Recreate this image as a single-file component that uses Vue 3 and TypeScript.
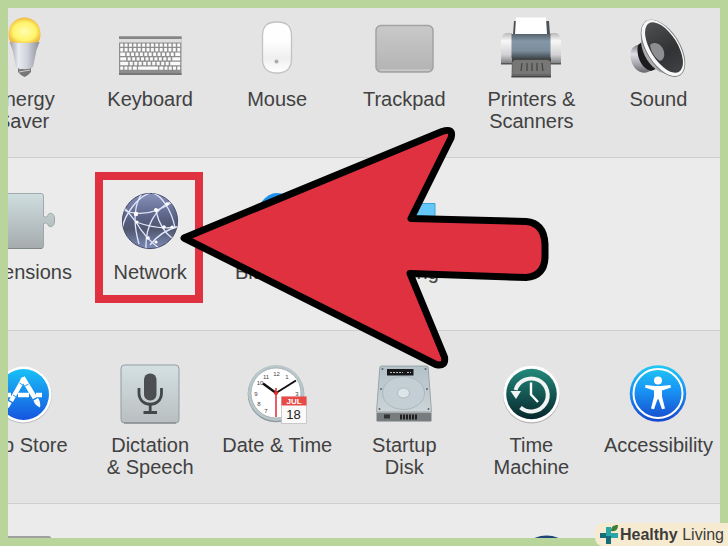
<script setup lang="ts">
interface Pane {
  icon: string
  label: string
  highlighted?: boolean
}

const rows: Pane[][] = [
  [
    { icon: 'energy', label: 'Energy\nSaver' },
    { icon: 'keyboard', label: 'Keyboard' },
    { icon: 'mouse', label: 'Mouse' },
    { icon: 'trackpad', label: 'Trackpad' },
    { icon: 'printer', label: 'Printers &\nScanners' },
    { icon: 'sound', label: 'Sound' },
  ],
  [
    { icon: 'extensions', label: 'Extensions' },
    { icon: 'network', label: 'Network', highlighted: true },
    { icon: 'bluetooth', label: 'Bluetooth' },
    { icon: 'sharing', label: 'Sharing' },
  ],
  [
    { icon: 'appstore', label: 'App Store' },
    { icon: 'dictation', label: 'Dictation\n& Speech' },
    { icon: 'clock', label: 'Date & Time' },
    { icon: 'disk', label: 'Startup\nDisk' },
    { icon: 'timemachine', label: 'Time\nMachine' },
    { icon: 'accessibility', label: 'Accessibility' },
  ],
]

// Key widths per keyboard row, in drawing units
const keyRows: number[][] = [
  [3, 3, 3, 3, 3, 3, 3, 3, 3, 3, 3, 3, 3, 3],
  [3, 3, 3, 3, 3, 3, 3, 3, 3, 3, 3, 3, 3, 3],
  [5, 3, 3, 3, 3, 3, 3, 3, 3, 3, 3, 3, 5],
  [6, 3, 3, 3, 3, 3, 3, 3, 3, 3, 3, 8],
  [8, 3, 3, 3, 3, 3, 3, 3, 3, 3, 10],
  [3, 3, 3, 4, 20, 4, 3, 3, 3, 3],
]

const keys = keyRows.flatMap((widths, row) => {
  const total = widths.reduce((a, b) => a + b, 0)
  const gap = (60 - total) / (widths.length - 1)
  let x = 2.2
  return widths.map((w) => {
    const key = { x, y: 27.4 + row * 4.6, w }
    x += w + gap
    return key
  })
})

const clockNumbers = [
  { n: '12', x: 31.5, y: 14 },
  { n: '1', x: 42, y: 17 },
  { n: '3', x: 52, y: 34 },
  { n: '7', x: 21, y: 51 },
  { n: '8', x: 14, y: 44 },
  { n: '9', x: 11, y: 34 },
  { n: '10', x: 15, y: 23 },
  { n: '11', x: 21, y: 17 },
]
</script>

<template>
  <div class="frame">
    <main class="panel">
      <div class="rows">
        <section v-for="(row, r) in rows" :key="r" class="row">
          <button
            v-for="pane in row"
            :key="pane.icon"
            type="button"
            class="pane"
            :class="{ highlighted: pane.highlighted }"
          >
            <svg class="icon" viewBox="0 0 64 64" aria-hidden="true">
              <g v-if="pane.icon === 'energy'">
                <defs>
                  <radialGradient id="bulb" cx=".5" cy=".55" r=".55">
                    <stop offset="0" stop-color="#fffdb0" />
                    <stop offset=".65" stop-color="#fff46a" />
                    <stop offset="1" stop-color="#efb63a" />
                  </radialGradient>
                  <linearGradient id="cone">
                    <stop offset="0" stop-color="#9b9ca3" />
                    <stop offset=".3" stop-color="#e9eaf0" />
                    <stop offset=".6" stop-color="#cfd1da" />
                    <stop offset="1" stop-color="#8e9098" />
                  </linearGradient>
                </defs>
                <path d="M27 50h13v6l-3 3-3.500 2-3.500-2-3-3z" fill="#777" />
                <path d="M28 53l11-2M28 56l11-2" stroke="#ccc" stroke-width="1" />
                <path d="M18.500 26h30l-3 8-3.500 17c-4 3-13 3-17 0l-3.500-17z" fill="url(#cone)" />
                <path d="M17.500 17.500a16 16 0 0 1 32 0c0 4-1 7-2 8.500q-14 2-28 0c-1-1.500-2-4.500-2-8.500z" fill="url(#bulb)" />
              </g>

              <g v-else-if="pane.icon === 'keyboard'">
                <rect x="1" y="20.500" width="62.500" height="38.500" fill="#8d8d8d" />
                <rect x="1" y="20.500" width="62.500" height="2.500" fill="#858585" />
                <rect x="1" y="23" width="62.500" height="3.500" fill="#dedede" />
                <rect v-for="(k, i) in keys" :key="i" :x="k.x" :y="k.y" :width="k.w" height="3.400" rx=".5" fill="#fafafa" />
                <rect x="1" y="57" width="62.500" height="2" fill="#777" />
              </g>

              <g v-else-if="pane.icon === 'mouse'">
                <defs>
                  <linearGradient id="mouse" x2="0" y2="1">
                    <stop offset="0" stop-color="#fff" />
                    <stop offset=".4" stop-color="#fdfdfd" />
                    <stop offset=".7" stop-color="#efefef" />
                    <stop offset="1" stop-color="#fff" />
                  </linearGradient>
                </defs>
                <path d="M32 6c10 0 14 4 14.500 13v25c-.5 9-5 13-14.500 13s-14-4-14.500-13v-25c.5-9 4.500-13 14.500-13z" fill="url(#mouse)" stroke="#c2c2c2" stroke-width="1.300" />
                <circle cx="31.500" cy="45.500" r="2" fill="#aaa" />
              </g>

              <g v-else-if="pane.icon === 'trackpad'">
                <defs>
                  <linearGradient id="pad" x2="0" y2="1">
                    <stop offset="0" stop-color="#c9c9c9" />
                    <stop offset="1" stop-color="#b3b3b3" />
                  </linearGradient>
                </defs>
                <rect x="4" y="9.500" width="57" height="46.500" rx="5" fill="url(#pad)" stroke="#a2a2a2" stroke-width="1.500" />
                <path d="M8 54.200h50" stroke="#d2d2d2" stroke-width="1.200" />
              </g>

              <g v-else-if="pane.icon === 'printer'">
                <defs>
                  <linearGradient id="roller" x2="0" y2="1">
                    <stop offset="0" stop-color="#56636e" />
                    <stop offset=".3" stop-color="#8497a6" />
                    <stop offset=".7" stop-color="#7b8d9b" />
                    <stop offset="1" stop-color="#434c54" />
                  </linearGradient>
                  <linearGradient id="cap" x2="0" y2="1">
                    <stop offset="0" stop-color="#b9b9b9" />
                    <stop offset=".25" stop-color="#f7f7f7" />
                    <stop offset=".7" stop-color="#d2d2d4" />
                    <stop offset="1" stop-color="#77787a" />
                  </linearGradient>
                </defs>
                <path d="M15 5h3v14h-4zM47 5h3l1 14h-4z" fill="#4c5156" />
                <path d="M17 1.500h30l1 17h-32z" fill="#fff" />
                <path d="M2 24q1-6 5-7h6v31h-11zM62 24q-1-6-5-7h-6v31h11z" fill="url(#cap)" />
                <path d="M2 47h60v1.500h-60z" fill="#555" />
                <path d="M13 41h38.500l.5 20h-39.500z" fill="#666" />
                <path d="M14 43h37l.5 15h-38z" fill="#777776" />
                <path d="M12.500 18h39v24h-39z" fill="url(#roller)" />
                <path d="M13 42h39v4l-3-2h-33l-3 2z" fill="#454545" />
                <path d="M23 47l-1 8M28 47v8M33 47v8M38 47v8M43 47l1 8" stroke="#444" stroke-width="1.200" />
                <path d="M12.500 60h39.500v1.500h-39.500z" fill="#444" />
              </g>

              <g v-else-if="pane.icon === 'sound'">
                <defs>
                  <linearGradient id="magnet" x2="0" y2="1">
                    <stop offset="0" stop-color="#77777b" />
                    <stop offset=".35" stop-color="#dedee6" />
                    <stop offset=".7" stop-color="#a6a5ae" />
                    <stop offset="1" stop-color="#66656c" />
                  </linearGradient>
                  <linearGradient id="speaker">
                    <stop offset="0" stop-color="#4c4e50" />
                    <stop offset=".6" stop-color="#303234" />
                    <stop offset="1" stop-color="#3f4144" />
                  </linearGradient>
                </defs>
                <path d="M12 29c-6 1-9 7-7 15 2 9 10 15 17 12l6-3-12-25z" fill="url(#magnet)" />
                <path d="M12 29c-2 9 2 23 13 26l5-2-13-28z" fill="#1c1c1e" />
                <path d="M20 4c-4 6-4 14-5 22 1 12 8 24 19 30l14 4z" fill="#a9a9ae" />
                <path d="M19 10c-2 8-2 12-1 18 3 12 10 20 19 27" fill="none" stroke="#e4e4e9" stroke-width="3" />
                <ellipse cx="37" cy="32.300" rx="32" ry="17" transform="rotate(58 37 32.300)" fill="#77777a" />
                <ellipse cx="37" cy="32" rx="31.500" ry="16" transform="rotate(58 37 32)" fill="#f7f7f7" />
                <ellipse cx="38" cy="31.500" rx="28.500" ry="13.500" transform="rotate(58 38 31.500)" fill="url(#speaker)" />
                <path d="M24 29c5-5 13 0 14 7 1 5-1 8-4 9-5-3-9-9-10-16z" fill="#8d8e92" />
              </g>

              <g v-else-if="pane.icon === 'extensions'">
                <defs>
                  <linearGradient id="puzzle" x2="0" y2="1">
                    <stop offset="0" stop-color="#cfdee0" />
                    <stop offset="1" stop-color="#a5abad" />
                  </linearGradient>
                </defs>
                <path d="M0 4.500h50q2.500 0 2.500 2.500v20.500c1.500 0 2.500 1 4 0 .5-4.500 6.500-4.500 7 1.500v4c-.5 6-6.500 6-7 1.500-1.500-1-2.500 0-4 0v22.500q0 2.500-2.500 2.500h-50z" fill="url(#puzzle)" stroke="#929b9d" stroke-width=".8" />
                <path d="M0 59.500h51" stroke="#80888a" stroke-width="1.200" />
              </g>

              <g v-else-if="pane.icon === 'network'">
                <defs>
                  <linearGradient id="globe" x2="0" y2="1">
                    <stop offset="0" stop-color="#8792bd" />
                    <stop offset=".45" stop-color="#596183" />
                    <stop offset=".65" stop-color="#50576f" />
                    <stop offset="1" stop-color="#7e8bb8" />
                  </linearGradient>
                  <clipPath id="globeClip"><circle cx="32" cy="32" r="27.500" /></clipPath>
                </defs>
                <circle cx="32" cy="32" r="27.600" fill="url(#globe)" stroke="#454a66" stroke-width="1" />
                <g clip-path="url(#globeClip)" fill="none" stroke="#e3e7fb" stroke-width="1.300">
                  <path d="M5 21q24 10 51-9" />
                  <path d="M6 18l12 15q9 16 24 27" />
                  <path d="M25 3c-8 10-11 28-4 52" />
                  <path d="M32 4c-12 4-25 20-28 36" />
                  <path d="M52 13C38 20 27 36 28 60" />
                  <path d="M34 4c9 1 20 18 23 35" />
                  <path d="M38 22c3 13 10 23 17 28" />
                  <path d="M18 33q22 8 42 5" />
                  <path d="M59 38q-16 4-27 18" />
                </g>
                <g fill="#fff">
                  <circle cx="18" cy="25" r="2.200" /><circle cx="38" cy="21" r="2" /><circle cx="49" cy="15" r="1.800" />
                  <circle cx="19" cy="33" r="1.600" /><circle cx="46" cy="38" r="1.800" /><circle cx="30" cy="49" r="1.800" /><circle cx="38" cy="53" r="1.600" />
                  <circle cx="54" cy="38" r="1.600" />
                </g>
              </g>

              <g v-else-if="pane.icon === 'bluetooth'">
                <ellipse cx="32" cy="32" rx="21" ry="28" fill="#1c91e8" />
                <path d="M22 22l20 20-10 10V12l10 10-20 20" fill="none" stroke="#fff" stroke-width="3" />
              </g>

              <g v-else-if="pane.icon === 'sharing'">
                <path d="M2 10h20l5 4.500h36v43h-61z" fill="#64c7f7" stroke="#41a3d5" stroke-width="1" />
              </g>

              <g v-else-if="pane.icon === 'appstore'">
                <defs>
                  <linearGradient id="store" x2="0" y2="1">
                    <stop offset="0" stop-color="#19c1f7" />
                    <stop offset="1" stop-color="#1654e0" />
                  </linearGradient>
                </defs>
                <circle cx="32.500" cy="33.200" r="28.300" fill="#bdbdbd" />
                <circle cx="32.500" cy="32.500" r="28" fill="#fff" />
                <circle cx="32.500" cy="32.500" r="25.500" fill="url(#store)" />
                <path d="M11 33h9M27 33h11M45 33h6" stroke="#fff" stroke-width="4.500" />
                <path d="M33 16L20 39" stroke="#fff" stroke-width="4.500" />
                <path d="M19 40l-3 5" stroke="#fff" stroke-width="4" />
                <path d="M31.500 15.500L44 36" stroke="#fff" stroke-width="5" />
                <path d="M42.500 38.500l4.500-2.500q3 4 2 9.500-5-2-6.500-7z" fill="#fff" />
                <path d="M28.500 21l4 2.500M22 33l4 2.500M33 24.500l4.500-2.500" stroke="#279be9" stroke-width="1" />
              </g>

              <g v-else-if="pane.icon === 'dictation'">
                <defs>
                  <linearGradient id="plate" x2="0" y2="1">
                    <stop offset="0" stop-color="#d4e0e3" />
                    <stop offset="1" stop-color="#b9bfc0" />
                  </linearGradient>
                </defs>
                <rect x="3" y="3" width="58" height="58" rx="3.500" fill="url(#plate)" stroke="#929c9f" stroke-width="1" />
                <path d="M6 61h52" stroke="#777f81" stroke-width="1.200" />
                <rect x="26" y="11.500" width="12.500" height="27" rx="6" fill="#4b4f52" />
                <path d="M21 26v5c0 15 22.500 15 22.500 0v-5" fill="none" stroke="#43474a" stroke-width="2.800" />
                <path d="M32.200 42v9M25.500 50.500h13.500" stroke="#43474a" stroke-width="2.800" />
              </g>

              <g v-else-if="pane.icon === 'clock'">
                <circle cx="31" cy="32" r="28.300" fill="#8e999d" />
                <circle cx="31" cy="31" r="28" fill="#b9c7ca" />
                <circle cx="31" cy="31" r="25" fill="#fff" stroke="#98a3a6" stroke-width=".7" />
                <text v-for="c in clockNumbers" :key="c.n" :x="c.x" :y="c.y" class="clock-number">{{ c.n }}</text>
                <path d="M31 31L51 18.500" stroke="#111" stroke-width="2" />
                <path d="M31 31L18 21.500" stroke="#111" stroke-width="2.400" />
                <rect x="36.500" y="35" width="25" height="26.500" fill="#fafafa" stroke="#b9b9b9" stroke-width=".7" />
                <rect x="36.500" y="34.500" width="25" height="9" fill="#e84a48" />
                <text x="49" y="42" class="month">JUL</text>
                <text x="48.500" y="56.500" class="day">18</text>
                <path d="M31 26v29" stroke="#e5262b" stroke-width="1.500" />
                <circle cx="31" cy="31" r="2" fill="#e5262b" />
              </g>

              <g v-else-if="pane.icon === 'disk'">
                <defs>
                  <linearGradient id="disk" x2="0" y2="1">
                    <stop offset="0" stop-color="#b3c1c7" />
                    <stop offset="1" stop-color="#cbd4d7" />
                  </linearGradient>
                </defs>
                <path d="M9.500 4h45q1.500 0 1.700 1.500l3.300 44h-55l3.300-44q.2-1.500 1.700-1.500z" fill="url(#disk)" stroke="#8d999e" stroke-width=".8" />
                <path d="M4.500 49.500h55v9q0 1-1 1h-53q-1 0-1-1z" fill="#777c7e" />
                <path d="M4.500 50h55" stroke="#dce2e4" stroke-width="1" />
                <ellipse cx="31.500" cy="31" rx="21" ry="16.500" fill="#c3cfd4" stroke="#aab9bf" stroke-width="1" />
                <ellipse cx="31.500" cy="31" rx="6" ry="5" fill="#dce4e7" stroke="#a4b2b8" stroke-width=".8" />
                <rect x="15" y="7" width="26.500" height="6.500" fill="#161819" />
                <path d="M18 10.500h13M35 10.500h4" stroke="#bbb" stroke-width="1" stroke-dasharray="2 1" />
                <path d="M29 52.500v5M32 52.500v5M35 52.500v5M38 52.500v5M41 52.500v5M44 52.500v5" stroke="#111" stroke-width="1.700" />
                <path d="M12 52.500h6v4h-6z" fill="#333" />
                <g fill="#59656a">
                  <circle cx="10.500" cy="7" r="1" /><circle cx="53.500" cy="7" r="1" /><circle cx="9" cy="27" r="1" />
                  <circle cx="55" cy="27" r="1" /><circle cx="7.500" cy="47" r="1" /><circle cx="56.500" cy="47" r="1" />
                </g>
              </g>

              <g v-else-if="pane.icon === 'timemachine'">
                <defs>
                  <linearGradient id="time" x2="0" y2="1">
                    <stop offset="0" stop-color="#23897c" />
                    <stop offset="1" stop-color="#06262b" />
                  </linearGradient>
                </defs>
                <circle cx="32.500" cy="33" r="28.500" fill="#b5b5b5" />
                <circle cx="32.500" cy="32" r="28.300" fill="#fff" />
                <circle cx="32.500" cy="32" r="25.300" fill="url(#time)" />
                <path d="M16.500 28a16.500 16.500 0 1 1 5 17.500" fill="none" stroke="#f1f4f3" stroke-width="4" />
                <path d="M11.500 29h10.500l-5 8z" fill="#f1f4f3" />
                <path d="M32 20.500v12l7 7.500" fill="none" stroke="#fff" stroke-width="2.400" />
              </g>

              <g v-else-if="pane.icon === 'accessibility'">
                <defs>
                  <linearGradient id="access" x2="0" y2="1">
                    <stop offset="0" stop-color="#22c9f3" />
                    <stop offset=".45" stop-color="#1893f5" />
                    <stop offset="1" stop-color="#1746ca" />
                  </linearGradient>
                </defs>
                <circle cx="32" cy="31.500" r="28.300" fill="url(#access)" />
                <circle cx="32" cy="31.500" r="24.500" fill="none" stroke="#fff" stroke-width="2" />
                <circle cx="32" cy="18.500" r="4" fill="#fff" />
                <path d="M19.500 23l9.500 1h6l9.500-1 .5 2.500-9 3v6l3 12-3 .7-3.500-10h-1l-3.500 10-3-.7 3-12v-6l-9-3z" fill="#fff" />
              </g>
            </svg>
            <span class="label">{{ pane.label }}</span>
          </button>
        </section>

        <!-- Next row, only its icon tops reach into the window -->
        <div class="row" aria-hidden="true">
          <div class="pane">
            <svg class="icon" viewBox="0 0 64 64">
              <rect x="0" y="1" width="60" height="58" rx="2" fill="#a0a0a0" />
            </svg>
          </div>
          <div class="pane"></div>
          <div class="pane"></div>
          <div class="pane"></div>
          <div class="pane">
            <svg class="icon" viewBox="0 0 64 64">
              <ellipse cx="47.500" cy="31" rx="30" ry="30.500" fill="#1d4676" />
            </svg>
          </div>
        </div>
      </div>
    </main>

    <svg class="pointer" viewBox="0 0 372 244" aria-hidden="true">
      <path
        d="M6 113L264 6.500Q276 2.500 273 13L233 93.500L348 96.500Q366 98 367 119V133Q366 151 348 152.500L232 148.500L266.500 232Q268 242 258 239.500Z"
        fill="#df3140"
        stroke="#000"
        stroke-width="7"
        stroke-linejoin="round"
      />
    </svg>

    <a class="brand" href="#">
      <svg class="brand-mark" viewBox="0 0 20 22" aria-hidden="true">
        <path d="M7 3h5v6h7v5h-7v6h-5v-6h-6v-5h6z" fill="#2aa6a6" />
        <path d="M7 12h5v8h-5zM1 9h6v5h-6z" fill="#176d78" />
        <path d="M12 7c0-4 2-6 7-6 0 4-2 7-7 6z" fill="#3f7e36" />
      </svg>
      <span><strong>Healthy</strong> Living</span>
    </a>
  </div>
</template>

<style>
body {
  background: #bad59b;
}
</style>

<style scoped>
.frame {
  position: relative;
  box-sizing: border-box;
  height: 100vh;
  padding: 8px;
  overflow: hidden;
  background: #bad59b;
  font-family: "Liberation Sans", Arial, sans-serif;
}

.panel {
  height: 100%;
  overflow: hidden;
  background: #ebebeb;
}

.rows {
  margin-top: -23px;
}

.row {
  display: grid;
  grid-template-columns: repeat(6, 17.8%);
  justify-content: end;
  box-sizing: border-box;
  min-height: 173px;
  margin-right: -2px;
  border-bottom: 1px solid #d0d0d0;
  background: #e4e4e4;
}

.row:nth-child(even) {
  background: #ebebeb;
}

.pane {
  position: relative;
  display: flex;
  flex-direction: column;
  align-items: center;
  justify-content: flex-start;
  gap: 8px;
  margin: 0;
  padding: 31px 0 0;
  border: 0;
  background: none;
  color: #414141;
  font: inherit;
}

.icon {
  flex: none;
  width: 64px;
  height: 64px;
}

.label {
  font-size: 20px;
  line-height: 22px;
  text-align: center;
  white-space: pre;
}

.highlighted::after {
  content: "";
  position: absolute;
  inset: 14px 11px 27px 8px;
  border: 8px solid #df3140;
}

.clock-number {
  font-size: 6px;
  fill: #444;
  text-anchor: middle;
}

.month {
  font-size: 8px;
  font-weight: bold;
  fill: #fff;
  text-anchor: middle;
}

.day {
  font-size: 13px;
  fill: #222;
  text-anchor: middle;
}

.pointer {
  position: absolute;
  top: 125px;
  right: 178px;
  width: 372px;
  height: 244px;
  pointer-events: none;
}

.brand {
  position: absolute;
  right: 0;
  bottom: 0;
  display: flex;
  align-items: center;
  gap: 1px;
  padding: 0 4px 0 4px;
  border-radius: 8px 0 0 8px;
  background: #f6ebd1;
  color: #3d3d3b;
  font-size: 16px;
  line-height: 23px;
  text-decoration: none;
}

.brand-mark {
  width: 20px;
  height: 22px;
}
</style>
